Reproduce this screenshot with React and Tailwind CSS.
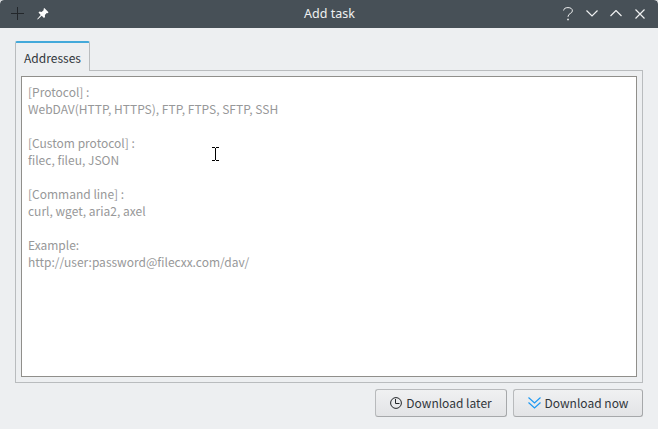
import React from "react";

const lines = [
  { text: "[Protocol] :" },
  { text: "WebDAV(HTTP, HTTPS), FTP, FTPS, SFTP, SSH" },
  { text: "" },
  { text: "[Custom protocol] :" },
  { text: "filec, fileu, JSON" },
  { text: "" },
  { text: "[Command line] :" },
  { text: "curl, wget, aria2, axel" },
  { text: "" },
  { text: "Example:" },
  { text: "http://user:password@filecxx.com/dav/" },
];

function TitleBar() {
  return (
    <header className="flex h-7 shrink-0 items-center justify-between rounded-t-[4px] bg-[#475057] pr-[13px] pb-px pl-[11px] text-[#eff0f1]">
      <div className="flex w-[85px] items-center gap-[13px]">
        <svg width="13" height="13" viewBox="0 0 13 13" className="text-[#23272b]" stroke="currentColor" fill="none">
          <path d="M0 6.5H13M6.5 0V13" />
        </svg>
        <svg width="12" height="12" viewBox="0 0 12 12" fill="#fcfcfc">
          <path d="M7.3 0L11.5 4.3L10.5 5.3L9.7 5L7.9 7L8 9L7 10L4.7 7.7L0.7 11.5L0.2 11L3.7 6.9L1.5 4.6L2.6 3.6L4.6 3.9L6.8 2.1L6.5 1Z" />
        </svg>
      </div>
      <h1 className="font-['Noto_Sans',sans-serif] text-[12.5px] leading-[26px]">Add task</h1>
      <div className="flex w-[82px] items-center justify-between">
        <svg width="10" height="14" viewBox="0 0 10 14" fill="none" stroke="currentColor">
          <path d="M0.6 3.5C0.8 1.5 2.5 0.6 5 0.6C7.7 0.6 9.4 1.8 9.4 3.9C9.4 6.6 5 6.3 5 9.8" />
          <path d="M4.2 12.5H5.8" strokeWidth="1.5" />
        </svg>
        <svg width="12" height="7" viewBox="0 0 12 7" fill="none" stroke="currentColor" strokeWidth="1.2">
          <path d="M0.5 0.5L6 6L11.5 0.5" />
        </svg>
        <svg width="12" height="7" viewBox="0 0 12 7" fill="none" stroke="currentColor" strokeWidth="1.2">
          <path d="M0.5 6L6 0.5L11.5 6" />
        </svg>
        <svg width="10" height="10" viewBox="0 0 10 10" fill="none" stroke="currentColor" strokeWidth="1.2">
          <path d="M0.5 0.5L9.5 9.5M9.5 0.5L0.5 9.5" />
        </svg>
      </div>
    </header>
  );
}

function ActionButton({ icon, children, className }) {
  return (
    <button
      className={`flex h-7 items-center justify-center gap-1 rounded-[3px] border border-[#b8babc] border-r-[#a6a8aa] border-b-[#a6a8aa] bg-linear-to-b from-[#f0f1f2] to-[#e3e4e6] text-[12px] text-[#31363b] ${className}`}
    >
      {icon}
      <span className="leading-4 whitespace-nowrap">{children}</span>
    </button>
  );
}

export default function App() {
  return (
    <div className="h-[429px] w-[658px] bg-[#d5d8da]">
      <div className="flex h-full flex-col overflow-hidden rounded-t-[4px] bg-[#edeff1] font-['Noto_Sans_CJK_SC',sans-serif] text-[12px] text-[#31363b]">
        <TitleBar />
        <main className="flex flex-1 flex-col px-[15px] pt-[13px]">
          <div className="z-10 -mb-px flex h-[30px] w-[75px] items-center justify-center rounded-t-[2px] border-x border-t-2 border-x-[#b9bcbe] border-t-[#43a9da] bg-[#edeff1] pt-px leading-4">
            Addresses
          </div>
          <section className="h-[313px] border border-[#b9bcbe] p-[5px]">
            <div className="relative h-full border border-[#908f8b] bg-white px-[6px] pt-[6px] text-[#979899]">
              {lines.map((line, i) => (
                <div key={i} className="h-[17px] leading-[17px] whitespace-pre">
                  <span>{line.text}</span>
                </div>
              ))}
              <svg className="absolute top-[70px] left-[190px]" width="7" height="14" viewBox="0 0 7 14" fill="none" stroke="#000" shapeRendering="crispEdges">
                <path d="M0 0.5H3M4 0.5H7M3.5 1V13M0 13.5H3M4 13.5H7" />
              </svg>
            </div>
          </section>
          <footer className="mt-[6px] flex justify-end gap-[6px]">
            <ActionButton
              className="w-[132px]"
              icon={
                <svg width="12" height="12" viewBox="0 0 12 12" fill="none" stroke="#232629">
                  <circle cx="6" cy="6" r="5.4" />
                  <path d="M5.5 2V6.5H9.5" />
                </svg>
              }
            >
              Download later
            </ActionButton>
            <ActionButton
              className="w-[130px]"
              icon={
                <svg width="13" height="12" viewBox="0 0 13 12" fill="none" stroke="#1d99f3" strokeWidth="1.2">
                  <path d="M0.5 0.5L6.5 6L12.5 0.5M0.5 5.5L6.5 11L12.5 5.5" />
                </svg>
              }
            >
              Download now
            </ActionButton>
          </footer>
        </main>
      </div>
    </div>
  );
}
